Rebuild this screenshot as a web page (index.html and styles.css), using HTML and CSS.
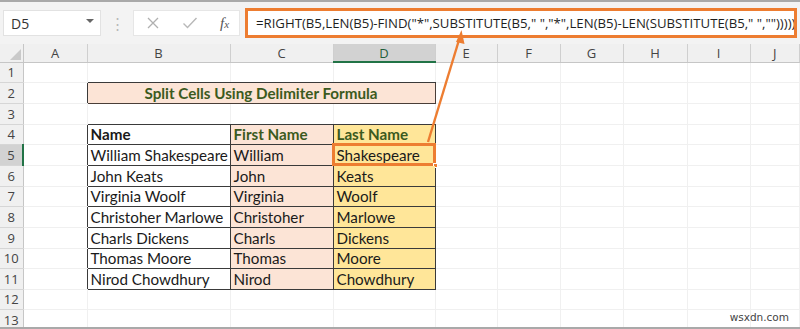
FILE: index.html
```html
<!DOCTYPE html>
<html>
<head>
<meta charset="utf-8">
<link rel="stylesheet" href="styles.css">
</head>
<body>
<div class="app">
  <div class="toolbar">
    <div class="namebox"><span class="nb-text">D5</span><span class="nb-arrow"></span></div>
    <div class="grip">⋮</div>
    <div class="fxicons">
      <svg class="ico" width="14" height="14" viewBox="0 0 14 14"><path d="M2 2 L12 12 M12 2 L2 12" stroke="#b0b0b0" stroke-width="1.3" fill="none"/></svg>
      <svg class="ico" width="16" height="14" viewBox="0 0 16 14"><path d="M1.5 7.5 L5.5 11.5 L14.5 2" stroke="#b8b8b8" stroke-width="1.4" fill="none"/></svg>
      <span class="fx">f<i>x</i></span>
    </div>
    <div class="formula">=RIGHT(B5,LEN(B5)-FIND("*",SUBSTITUTE(B5," ","*",LEN(B5)-LEN(SUBSTITUTE(B5," ","")))))</div>
  </div>
  <table class="sheet">
    <colgroup>
      <col class="w-rh"><col class="w-a"><col class="w-b"><col class="w-c"><col class="w-d"><col class="w-e"><col class="w-f"><col class="w-g"><col class="w-h"><col class="w-i"><col>
    </colgroup>
    <tr class="hdr">
      <th class="corner"></th>
      <th class="ch">A</th><th class="ch">B</th><th class="ch">C</th><th class="ch sel">D</th><th class="ch">E</th><th class="ch">F</th><th class="ch">G</th><th class="ch">H</th><th class="ch">I</th><th class="ch">J</th>
    </tr>
    <tr class="h20">
      <th class="rh">1</th><td></td><td class="tt"></td><td class="tt"></td><td class="tt"></td><td></td><td></td><td></td><td></td><td></td><td></td>
    </tr>
    <tr class="h21">
      <th class="rh">2</th><td class="tl"></td><td class="title" colspan="3">Split Cells Using Delimiter Formula</td><td></td><td></td><td></td><td></td><td></td><td></td>
    </tr>
    <tr class="h21">
      <th class="rh">3</th><td></td><td class="tt"></td><td class="tt"></td><td class="tt"></td><td></td><td></td><td></td><td></td><td></td><td></td>
    </tr>
    <tr class="h20">
      <th class="rh">4</th><td class="tl"></td><td class="t b">Name</td><td class="t pe g b">First Name</td><td class="t ye g b">Last Name</td><td></td><td></td><td></td><td></td><td></td><td></td>
    </tr>
    <tr class="h21">
      <th class="rh rsel">5</th><td class="tl"></td><td class="t">William Shakespeare</td><td class="t pe">William</td><td class="t ye active">Shakespeare<span class="handle"></span></td><td></td><td></td><td></td><td></td><td></td><td></td>
    </tr>
    <tr class="h21">
      <th class="rh">6</th><td class="tl"></td><td class="t">John Keats</td><td class="t pe">John</td><td class="t ye">Keats</td><td></td><td></td><td></td><td></td><td></td><td></td>
    </tr>
    <tr class="h20">
      <th class="rh">7</th><td class="tl"></td><td class="t">Virginia Woolf</td><td class="t pe">Virginia</td><td class="t ye">Woolf</td><td></td><td></td><td></td><td></td><td></td><td></td>
    </tr>
    <tr class="h21">
      <th class="rh">8</th><td class="tl"></td><td class="t">Christoher Marlowe</td><td class="t pe">Christoher</td><td class="t ye">Marlowe</td><td></td><td></td><td></td><td></td><td></td><td></td>
    </tr>
    <tr class="h21">
      <th class="rh">9</th><td class="tl"></td><td class="t">Charls Dickens</td><td class="t pe">Charls</td><td class="t ye">Dickens</td><td></td><td></td><td></td><td></td><td></td><td></td>
    </tr>
    <tr class="h20">
      <th class="rh">10</th><td class="tl"></td><td class="t">Thomas Moore</td><td class="t pe">Thomas</td><td class="t ye">Moore</td><td></td><td></td><td></td><td></td><td></td><td></td>
    </tr>
    <tr class="h21">
      <th class="rh">11</th><td class="tl"></td><td class="t">Nirod Chowdhury</td><td class="t pe">Nirod</td><td class="t ye">Chowdhury</td><td></td><td></td><td></td><td></td><td></td><td></td>
    </tr>
    <tr class="h20">
      <th class="rh">12</th><td></td><td></td><td></td><td></td><td></td><td></td><td></td><td></td><td></td><td></td>
    </tr>
    <tr class="h21">
      <th class="rh">13</th><td></td><td></td><td></td><td></td><td></td><td></td><td></td><td></td><td></td><td></td>
    </tr>
  </table>
  <svg class="callout" width="800" height="329" viewBox="0 0 800 329">
    <line x1="428" y1="142" x2="459" y2="40" stroke="#ed7d31" stroke-width="2.4"/>
    <polygon points="461.5,30 456,42 464.5,44" fill="#ed7d31"/>
  </svg>
  <div class="watermark">wsxdn.com</div>
</div>
</body>
</html>
```

FILE: styles.css
```css
* { box-sizing: border-box; }
html, body { margin: 0; padding: 0; background: #ffffff; }
body { width: 800px; height: 329px; overflow: hidden; }

.app {
  position: relative;
  width: 800px;
  height: 329px;
  overflow: hidden;
  border-top: 2px solid #a9a9a9;
  border-bottom: 2px solid #a9a9a9;
  font-family: "Open Sans", "Noto Sans", sans-serif;
}

.toolbar {
  height: 42px;
  display: flex;
  align-items: center;
  background: #f3f3f3;
  padding-left: 3px;
}

.namebox {
  width: 98px;
  height: 26px;
  background: #fff;
  display: flex;
  align-items: center;
  justify-content: space-between;
  padding: 0 6px 0 7px;
  border: 1px solid #e2e2e2;
}
.nb-text { font-size: 14px; color: #333; }
.nb-arrow {
  width: 0; height: 0;
  border-left: 4px solid transparent;
  border-right: 4px solid transparent;
  border-top: 4px solid #666;
  margin-top: -4px;
}
.grip {
  width: 32px;
  text-align: center;
  color: #b9b9b9;
  font-size: 15px;
  line-height: 1;
}
.fxicons {
  width: 107px;
  height: 26px;
  background: #fff;
  display: flex;
  align-items: center;
  padding-left: 12px;
  gap: 22px;
  border: 1px solid #e6e6e6;
}
.fx {
  font-family: "Liberation Serif", serif;
  font-style: italic;
  font-size: 15px;
  color: #555;
}
.fx i { font-size: 11px; }

.formula {
  margin-left: 5px;
  width: 552px;
  height: 30px;
  border: 3px solid #ed7d31;
  background: #fff;
  font-size: 13.2px;
  color: #1e1e1e;
  padding-left: 8px;
  display: flex;
  align-items: center;
  white-space: nowrap;
  overflow: hidden;
}

.sheet {
  border-collapse: collapse;
  table-layout: fixed;
  width: 800px;
  background: #fff;
}
.w-rh { width: 23px; }
.w-a { width: 64px; }
.w-b { width: 143px; }
.w-c { width: 103px; }
.w-d { width: 102px; }
.w-e { width: 62px; }
.w-f { width: 63px; }
.w-g { width: 63px; }
.w-h { width: 64px; }
.w-i { width: 63px; }

.sheet th, .sheet td {
  padding: 0;
  margin: 0;
  overflow: hidden;
}
tr.hdr { height: 18px; }
tr.h20 { height: 20px; }
tr.h21 { height: 21px; }

.corner {
  position: relative;
  background: #f0f0f0;
  border-right: 1px solid #c6c6c6;
  border-bottom: 1px solid #c6c6c6;
}
.corner::after {
  content: "";
  position: absolute;
  right: 2px;
  bottom: 2px;
  width: 0; height: 0;
  border-left: 11px solid transparent;
  border-bottom: 11px solid #c9c9c9;
}
.ch {
  background: #f0f0f0;
  font-weight: normal;
  font-size: 13px;
  color: #444;
  text-align: center;
  line-height: 16px;
  border-right: 1px solid #cfcfcf;
  border-bottom: 1px solid #c6c6c6;
}
.ch.sel {
  background: #d2d2d2;
  border-bottom: 2px solid #217346;
  color: #1f5f3a;
}
.rh {
  background: #f0f0f0;
  font-weight: normal;
  font-size: 13px;
  color: #444;
  text-align: center;
  border-right: 1px solid #c6c6c6;
  border-bottom: 1px solid #d6d6d6;
}
.rh.rsel {
  background: #d2d2d2;
  border-right: 2px solid #217346;
}
.sheet td {
  border-right: 1px solid #f0f0f0;
  border-bottom: 1px solid #f0f0f0;
  font-family: "Lato", "Open Sans", sans-serif;
  font-size: 15.2px;
  color: #1a1a1a;
  line-height: 18px;
  padding-left: 3px;
  white-space: nowrap;
  position: relative;
  vertical-align: middle;
}
.sheet td.tl { border-right-color: #3a3a3a; }
.sheet td.tt { border-bottom-color: #3a3a3a; }
.sheet td.t { border: 1px solid #3a3a3a; }
.sheet td.b { font-weight: bold; }
.sheet td.g { color: #3b5a20; }
.sheet td.pe { background: #fce4d6; }
.sheet td.ye { background: #ffe699; }
.sheet td.title {
  background: #fce4d6;
  border: 1px solid #4a3e38;
  text-align: center;
  font-weight: bold;
  color: #3b5a20;
  padding-left: 0;
}
.sheet td.active {
  outline: 3px solid #ed7d31;
  outline-offset: -2px;
  overflow: visible;
}
.handle {
  position: absolute;
  right: -3px;
  bottom: -3px;
  width: 5px;
  height: 5px;
  background: #ed7d31;
  border: 1px solid #fff;
}

.callout {
  position: absolute;
  left: 0;
  top: -2px;
  pointer-events: none;
  z-index: 5;
}
.watermark {
  position: absolute;
  right: 11px;
  bottom: 4px;
  font-family: "DejaVu Sans", sans-serif;
  font-size: 10.5px;
  color: #444;
  z-index: 4;
}
```
